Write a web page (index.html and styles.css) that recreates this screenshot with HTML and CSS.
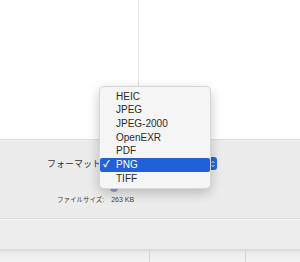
FILE: index.html
```html
<!DOCTYPE html>
<html lang="ja">
<head>
  <meta charset="UTF-8">
  <meta name="viewport" content="width=device-width, initial-scale=1.0">
  <title>書き出し</title>
  <link rel="stylesheet" href="styles.css">
</head>
<body>
  <div class="canvas">
    <div class="canvas-line"></div>
  </div>

  <div class="panel">
    <div class="format-row">
      <span class="label">フォーマット</span>
      <div class="popup">
        <span class="popup-value">PNG</span>
        <svg class="popup-arrows" width="4" height="8" viewBox="0 0 4 8">
          <path d="M0.6 3 L2 1.4 L3.4 3 M0.6 5 L2 6.6 L3.4 5" fill="none" stroke="#fff" stroke-width="0.9"/>
        </svg>
      </div>
    </div>
    <div class="knob-row">
      <span class="knob"></span>
    </div>
    <div class="size-row">
      <span class="size-label">ファイルサイズ:</span>
      <span class="size-value">263 KB</span>
    </div>
  </div>

  <div class="panel-lower"></div>

  <div class="footer">
    <div class="footer-cell wide"></div>
    <div class="footer-cell mid"></div>
    <div class="footer-cell"></div>
  </div>

  <!-- open popup menu -->
  <ul class="menu">
    <li>HEIC</li>
    <li>JPEG</li>
    <li>JPEG-2000</li>
    <li>OpenEXR</li>
    <li>PDF</li>
    <li class="selected"><span class="check">✓</span>PNG</li>
    <li>TIFF</li>
  </ul>
</body>
</html>
```

FILE: styles.css
```css
body {
  margin: 0;
  width: 300px;
  height: 262px;
  overflow: hidden;
  background: #fff;
  font-family: 'Liberation Sans', 'Noto Sans CJK JP', sans-serif;
  color: #222;
}

.canvas {
  height: 139px;
  background: #fff;
  display: flex;
}

.canvas-line {
  margin-left: 138px;
  width: 1px;
  height: 88px;
  background: #e2e2e2;
}

.panel {
  height: 78px;
  background: #ececec;
  border-top: 1px solid #dedede;
  border-bottom: 1px solid #dcdcdc;
}

.format-row {
  display: flex;
  align-items: center;
  margin-top: 17px;
  height: 13px;
}

.label {
  width: 100px;
  padding-left: 47px;
  box-sizing: border-box;
  font-size: 9px;
  color: #333;
  white-space: nowrap;
}

.popup {
  margin-left: 8px;
  width: 109px;
  height: 13px;
  border-radius: 3px;
  background: #2a63d8;
  display: flex;
  align-items: center;
  justify-content: space-between;
  padding: 0 2px 0 8px;
  box-sizing: border-box;
  color: #fff;
  font-size: 10px;
}

.popup-arrows {
  display: block;
}

.knob-row {
  height: 22px;
  padding-left: 110px;
  display: flex;
  align-items: flex-end;
}

.knob {
  width: 8px;
  height: 8px;
  border-radius: 4px;
  background: #8aa3d4;
}

.size-row {
  display: flex;
  align-items: center;
  margin-top: 2px;
  padding-left: 57px;
  gap: 7px;
  font-size: 6.5px;
  color: #444;
}

.size-value {
  font-size: 7px;
}

.panel-lower {
  height: 29px;
  background: #ededed;
  border-top: 1px solid #f6f6f6;
}

.footer {
  height: 13px;
  display: flex;
  background: linear-gradient(#d6d6d6, #ececec 4px, #f3f3f3);
}

.footer-cell {
  flex: 1;
}

.footer-cell.wide {
  flex: none;
  width: 149px;
  border-right: 1px solid #d6d6d6;
}

.footer-cell.mid {
  flex: none;
  width: 95px;
  border-right: 1px solid #d6d6d6;
}

.menu {
  position: absolute;
  left: 99px;
  top: 86px;
  width: 112px;
  margin: 0;
  padding: 2.5px 0;
  list-style: none;
  background: #f5f5f5;
  border: 1px solid rgba(0, 0, 0, 0.12);
  border-radius: 5px;
  box-shadow: 0 4px 12px rgba(0, 0, 0, 0.22);
  box-sizing: border-box;
  font-size: 10px;
}

.menu li {
  position: relative;
  height: 13.7px;
  line-height: 13.7px;
  padding-left: 16px;
  color: #2a2a2a;
}

.menu li.selected {
  background: #2260d8;
  color: #fff;
  border-radius: 2px;
}

.check {
  position: absolute;
  left: 3px;
  font-size: 9px;
  font-weight: bold;
}
```
